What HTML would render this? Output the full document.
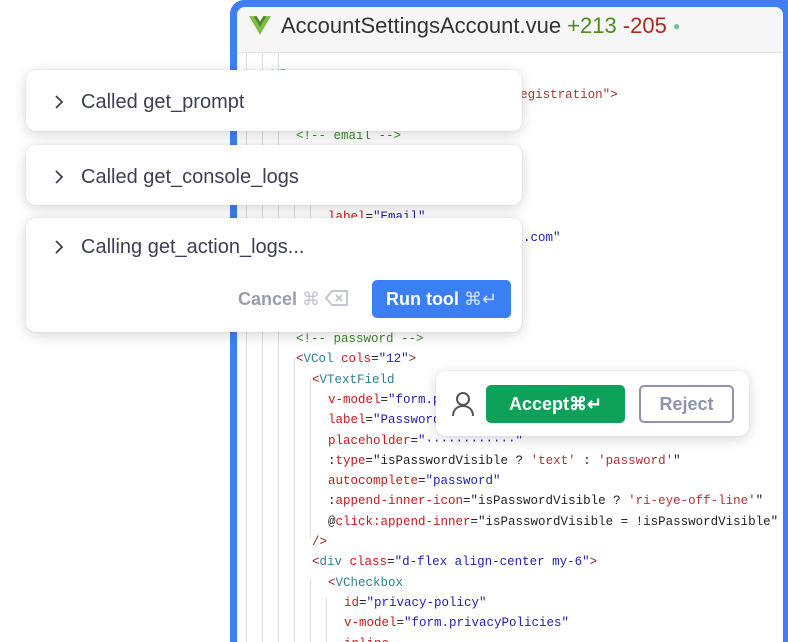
<!DOCTYPE html>
<html><head><meta charset="utf-8"><style>
*{margin:0;padding:0;box-sizing:border-box}
html,body{width:788px;height:642px;overflow:hidden}
body{background:#fff;position:relative;font-family:"Liberation Sans",sans-serif}
.ed{position:absolute;left:230px;top:0;width:570px;height:642px;background:#3f7ef5;border-radius:14px 14px 0 0}
.in{position:absolute;left:237px;top:7px;width:546px;height:635px;background:#fff;overflow:hidden;border-radius:8px 8px 0 0}
.hd{position:absolute;left:0;top:0;width:100%;height:46px;background:#f6f6f6;border-bottom:1px solid #e6e3d8}
.ttl{position:absolute;left:44px;top:6px;font-size:22px;color:#333;white-space:nowrap}
.code{position:absolute;left:0;top:0;font-family:"Liberation Mono",monospace;font-size:12.5px}
.l{position:absolute;height:20px;line-height:20px;white-space:pre;color:#222}
.g{position:absolute;width:1px;background:#ddd}
.t{color:#2b8090}.p{color:#8a1a1a}.a{color:#c8181c}.s{color:#1f1fb0}.c{color:#3c8a2e}.q{color:#a33}
.card{position:absolute;left:26px;width:496px;background:#fff;border-radius:10px;box-shadow:0 3px 14px rgba(0,0,0,.16),0 0 2px rgba(0,0,0,.08)}
.ct{position:absolute;left:55px;font-size:20px;color:#3d4054;white-space:nowrap}
.chev{position:absolute;left:25px;width:16px;height:16px}
.btn{position:absolute;border-radius:5px;font-weight:bold;font-size:18px;color:#fff;text-align:center;white-space:nowrap}
</style></head><body>
<div class="ed"></div>
<div class="in">
 <div class="code">
  <div class="g" style="left:9px;top:46px;height:700px"></div>
  <div class="g" style="left:25px;top:46px;height:700px"></div>
  <div class="g" style="left:41px;top:46px;height:700px"></div>
  <div class="g" style="left:57px;top:148px;height:120px"></div>
  <div class="g" style="left:73px;top:168px;height:80px"></div>
  <div class="g" style="left:57px;top:351px;height:300px"></div>
  <div class="g" style="left:73px;top:371px;height:160px"></div>
  <div class="g" style="left:73px;top:571px;height:100px"></div>
  <div class="g" style="left:89px;top:591px;height:60px"></div>
 </div>
 <div class="code" id="c"></div>
 <div class="hd">
  <svg style="position:absolute;left:12px;top:9px" width="22" height="20" viewBox="0 0 20 18"><path d="M0 0h4l6 10 6-10h4L10 17z" fill="#7fbf3f"/><path d="M4 0h3l3 5 3-5h3l-6 10z" fill="#4a8a2a"/></svg>
  <div class="ttl">AccountSettingsAccount.vue <span style="color:#4f8a1f">+213</span> <span style="color:#b3261e">-205</span> <span style="color:#6cc490;font-size:12px;vertical-align:3px">●</span></div>
 </div>
</div>

<div class="card" style="top:70px;height:61px">
 <svg class="chev" style="top:24px" viewBox="0 0 16 16"><path d="M5 2l6 6-6 6" fill="none" stroke="#3d4054" stroke-width="1.8"/></svg>
 <div class="ct" style="top:21px">Called get_prompt</div>
</div>
<div class="card" style="top:145px;height:60px">
 <svg class="chev" style="top:24px" viewBox="0 0 16 16"><path d="M5 2l6 6-6 6" fill="none" stroke="#3d4054" stroke-width="1.8"/></svg>
 <div class="ct" style="top:21px">Called get_console_logs</div>
</div>
<div class="card" style="top:218px;height:114px">
 <svg class="chev" style="top:21px" viewBox="0 0 16 16"><path d="M5 2l6 6-6 6" fill="none" stroke="#3d4054" stroke-width="1.8"/></svg>
 <div class="ct" style="top:18px">Calling get_action_logs...</div>
 <div style="position:absolute;left:212px;top:71px;font-size:18px;font-weight:bold;color:#9a9db0;white-space:nowrap">Cancel <span style="font-weight:normal;color:#bfc1cf">⌘</span>
  <svg width="24" height="18" viewBox="0 0 24 18" style="vertical-align:-2px"><path d="M7 2h15v14H7L1 9z" fill="none" stroke="#c4c6d2" stroke-width="2" stroke-linejoin="round"/><path d="M11 6l6 6M17 6l-6 6" stroke="#c4c6d2" stroke-width="2"/></svg></div>
 <div class="btn" style="left:346px;top:62px;width:139px;height:38px;line-height:38px;background:#3b7ff5">Run tool <span style="font-weight:normal;color:#d6e4ff">⌘↵</span></div>
</div>

<div class="card" style="left:436px;top:371px;width:313px;height:65px">
 <svg style="position:absolute;left:15px;top:20px" width="24" height="26" viewBox="0 0 24 26"><circle cx="12" cy="8" r="6" fill="none" stroke="#555" stroke-width="2"/><path d="M2 25c0-6 4-10 10-10s10 4 10 10" fill="none" stroke="#555" stroke-width="2"/></svg>
 <div class="btn" style="left:50px;top:14px;width:139px;height:38px;line-height:38px;background:#0ea15a">Accept⌘↵</div>
 <div class="btn" style="left:203px;top:14px;width:95px;height:38px;line-height:34px;border:2px solid #8f93ab;color:#8f93ab;background:#fff">Reject</div>
</div>

<script>
var L=[
[-3,1,'<span class="p">&lt;</span><span class="t">VForm</span>'],
[-2,2,'<span class="p">&lt;</span><span class="t">VForm</span> <span class="a">ref</span>=<span class="s">"refFrm"</span> <span class="a">@submit</span>=<span class="q">"onRegistration"</span><span class="p">&gt;</span>'],
[-1,2,'<span class="p">&lt;</span><span class="t">VRow</span><span class="p">&gt;</span>'],
[0,3,'<span class="c">&lt;!-- email --&gt;</span>'],
[1,3,'<span class="p">&lt;</span><span class="t">VCol</span> <span class="a">cols</span>=<span class="s">"12"</span><span class="p">&gt;</span>'],
[2,4,'<span class="p">&lt;</span><span class="t">VTextField</span>'],
[3,5,'<span class="a">v-model</span>=<span class="s">"form.email"</span>'],
[4,5,'<span class="a">label</span>=<span class="s">"Email"</span>'],
[5,5,'<span class="a">placeholder</span>=<span class="s">"johndoe@email.com"</span>'],
[6,5,'<span class="a">type</span>=<span class="s">"email"</span>'],
[7,4,'<span class="p">/&gt;</span>'],
[8,3,'<span class="p">&lt;/</span><span class="t">VCol</span><span class="p">&gt;</span>'],
[10,3,'<span class="c">&lt;!-- password --&gt;</span>'],
[11,3,'<span class="p">&lt;</span><span class="t">VCol</span> <span class="a">cols</span>=<span class="s">"12"</span><span class="p">&gt;</span>'],
[12,4,'<span class="p">&lt;</span><span class="t">VTextField</span>'],
[13,5,'<span class="a">v-model</span>=<span class="s">"form.password"</span>'],
[14,5,'<span class="a">label</span>=<span class="s">"Password"</span>'],
[15,5,'<span class="a">placeholder</span>=<span class="s">"············"</span>'],
[16,5,':<span class="a">type</span>="isPasswordVisible ? <span class="q">\'text\'</span> : <span class="q">\'password\'</span>"'],
[17,5,'<span class="a">autocomplete</span>=<span class="s">"password"</span>'],
[18,5,':<span class="a">append-inner-icon</span>="isPasswordVisible ? <span class="q">\'ri-eye-off-line\'</span>"'],
[19,5,'@<span class="a">click:append-inner</span>="isPasswordVisible = !isPasswordVisible"'],
[20,4,'<span class="p">/&gt;</span>'],
[21,4,'<span class="p">&lt;</span><span class="t">div</span> <span class="a">class</span>=<span class="s">"d-flex align-center my-6"</span><span class="p">&gt;</span>'],
[22,5,'<span class="p">&lt;</span><span class="t">VCheckbox</span>'],
[23,6,'<span class="a">id</span>=<span class="s">"privacy-policy"</span>'],
[24,6,'<span class="a">v-model</span>=<span class="s">"form.privacyPolicies"</span>'],
[25,6,'<span class="a">inline</span>']];
var h='';L.forEach(function(r){h+='<div class="l" style="left:'+(11+16*r[1])+'px;top:'+(119+20.3*r[0])+'px">'+r[2]+'</div>'});
document.getElementById('c').innerHTML=h;
</script>
</body></html>
